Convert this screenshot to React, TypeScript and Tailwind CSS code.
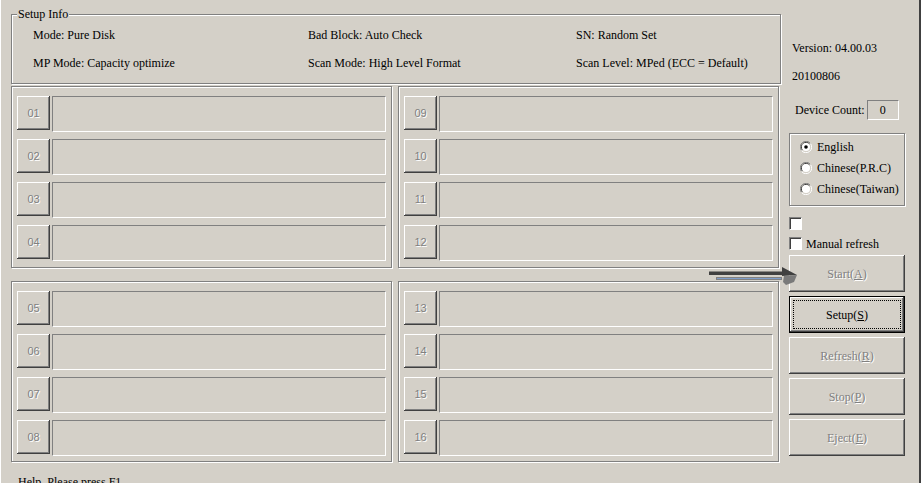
import React from "react";

const raised =
  "shadow-[inset_-1px_-1px_0_#404040,inset_1px_1px_0_#ffffff,inset_-2px_-2px_0_#808080]";
const etched =
  "border border-[#808080] shadow-[inset_1px_1px_0_#ffffff,1px_1px_0_#ffffff]";
const sunken =
  "border border-t-[#808080] border-l-[#808080] border-b-white border-r-white";
const disabledText = "text-[#808080] [text-shadow:1px_1px_0_#ffffff]";

function Slot({ n }: { n: string }) {
  return (
    <div className="flex items-start gap-[2px]">
      <div
        className={`w-[33px] h-[34px] flex items-center justify-center text-[11px] ${raised} ${disabledText}`}
        style={{ fontFamily: '"Liberation Sans", Arial, sans-serif' }}
      >
        {n}
      </div>
      <div className={`flex-1 h-[36px] ${sunken}`} />
    </div>
  );
}

function SlotGroup({ nums }: { nums: string[] }) {
  return (
    <div className={`w-[381px] ${etched} pt-[9px] pl-[5px] pr-[5px] flex flex-col gap-[7px]`}>
      {nums.map((n) => (
        <Slot key={n} n={n} />
      ))}
    </div>
  );
}

function Radio({ checked, label }: { checked?: boolean; label: string }) {
  return (
    <div className="flex items-center h-[21px]">
      <svg width="12" height="12" viewBox="0 0 12 12" className="mr-[5px]">
        <path d="M10.5 2.5 A5.5 5.5 0 0 0 1.5 9.5" stroke="#808080" fill="none" />
        <path d="M9.5 3 A4.5 4.5 0 0 0 2.5 9" stroke="#404040" fill="none" />
        <circle cx="6" cy="6" r="4" fill="#ffffff" />
        <path d="M1.5 9.5 A5.5 5.5 0 0 0 10.5 2.5" stroke="#ffffff" fill="none" />
        {checked && <circle cx="6" cy="6" r="1.8" fill="#000" />}
      </svg>
      <span>{label}</span>
    </div>
  );
}

function Check() {
  return (
    <div className="w-[13px] h-[13px] bg-white border border-t-[#808080] border-l-[#808080] border-b-white border-r-white shadow-[inset_1px_1px_0_#404040]" />
  );
}

function Btn({ label, u, def }: { label: string; u: string; def?: boolean }) {
  if (def) {
    return (
      <div className="h-[37px] border border-black">
        <div className={`h-full ${raised} p-[3px]`}>
          <div className="h-full border border-dotted border-black flex items-center justify-center text-black">
            <span>
              {label}(<span className="underline">{u}</span>)
            </span>
          </div>
        </div>
      </div>
    );
  }
  return (
    <div className={`h-[37px] ${raised} flex items-center justify-center ${disabledText}`}>
      <span>
        {label}(<span className="underline">{u}</span>)
      </span>
    </div>
  );
}

export default function App() {
  return (
    <div
      className="relative w-[921px] h-[483px] overflow-hidden bg-[#d4d0c8] text-[12px] leading-[14px] text-black flex flex-col"
      style={{ fontFamily: '"Liberation Serif", "Times New Roman", serif' }}
    >
      <div className="h-[2px] bg-gradient-to-r from-[#0a246a] via-[#5b7fc0] to-[#a6caf0]" />
      <div className="flex-1 flex border-l border-l-white border-r-2 border-r-[#404040]">
        <div className="flex flex-col ml-[10px] w-[770px]">
          {/* Setup Info */}
          <div className={`relative mt-[14px] h-[70px] ${etched}`}>
            <span className="absolute -top-[8px] left-[5px] bg-[#d4d0c8] px-[1px]">Setup Info</span>
            <div className="grid grid-cols-[275px_268px_1fr] gap-y-[14px] pl-[21px] pt-[13px]">
              <span>Mode: Pure Disk</span>
              <span>Bad Block: Auto Check</span>
              <span>SN: Random Set</span>
              <span>MP Mode: Capacity optimize</span>
              <span>Scan Mode: High Level Format</span>
              <span>Scan Level: MPed (ECC = Default)</span>
            </div>
          </div>
          <div className="flex gap-[6px] mt-[2px] h-[182px]">
            <SlotGroup nums={["01", "02", "03", "04"]} />
            <SlotGroup nums={["09", "10", "11", "12"]} />
          </div>
          <div className="flex gap-[6px] mt-[13px] h-[181px]">
            <SlotGroup nums={["05", "06", "07", "08"]} />
            <SlotGroup nums={["13", "14", "15", "16"]} />
          </div>
          <div className="mt-[13px] ml-[7px]">Help, Please press F1</div>
        </div>
        <div className="flex flex-col ml-[8px] w-[116px]">
          <div className="mt-[41px] ml-[3px]">Version: 04.00.03</div>
          <div className="mt-[14px] ml-[3px]">20100806</div>
          <div className="mt-[17px] ml-[6px] flex items-center h-[20px]">
            <span>Device Count:</span>
            <div className="ml-[2px] w-[32px] h-[20px] flex items-center justify-center border border-t-[#808080] border-l-[#808080] border-b-white border-r-white">
              0
            </div>
          </div>
          <div className={`mt-[13px] w-[116px] h-[73px] ${etched} pl-[10px] pt-[2px]`}>
            <Radio checked label="English" />
            <Radio label="Chinese(P.R.C)" />
            <Radio label="Chinese(Taiwan)" />
          </div>
          <div className="mt-[11px] h-[13px]">
            <Check />
          </div>
          <div className="mt-[7px] h-[13px] flex items-center">
            <Check />
            <span className="ml-[4px]">Manual refresh</span>
          </div>
          <div className="mt-[5px] flex flex-col gap-[4px]">
            <Btn label="Start" u="A" />
            <Btn label="Setup" u="S" def />
            <Btn label="Refresh" u="R" />
            <Btn label="Stop" u="P" />
            <Btn label="Eject" u="E" />
          </div>
        </div>
      </div>
      {/* cursor arrow overlay */}
      <svg
        className="absolute left-[700px] top-[262px]"
        width="100"
        height="26"
        viewBox="0 0 100 26"
      >
        <rect x="16" y="15" width="66" height="3" fill="#808080" />
        <rect x="17" y="16" width="64" height="1" fill="#7f9dc8" />
        <rect x="9" y="9.5" width="76" height="3.5" fill="#404040" />
        <polygon points="82,5 97,13 82,14" fill="#404040" />
        <polygon points="84,14 97,13 94,20 86,23 83,20" fill="#7a7a7a" />
      </svg>
    </div>
  );
}
